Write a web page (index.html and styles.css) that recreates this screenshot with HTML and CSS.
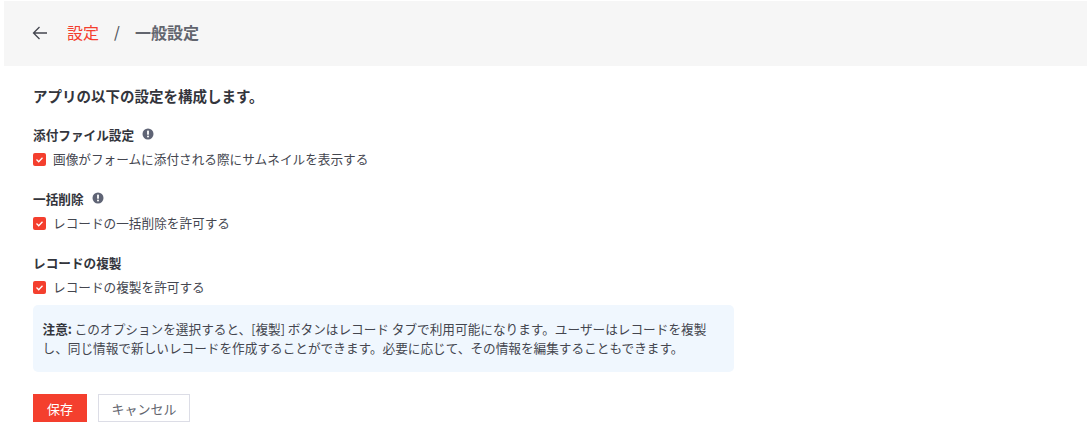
FILE: index.html
```html
<!DOCTYPE html>
<html lang="ja">
<head>
<meta charset="utf-8">
<title>一般設定</title>
<link rel="stylesheet" href="styles.css">
</head>
<body>
<header class="topbar">
  <svg class="back" width="16" height="16" viewBox="0 0 16 16" fill="none" stroke="#44464f" stroke-width="1.3"><path d="M15 8H1.5M7.5 2L1.5 8l6 6"/></svg>
  <a class="crumb-link">設定</a>
  <span class="crumb-sep">/</span>
  <span class="crumb-current">一般設定</span>
</header>
<main class="content">
  <h1 class="intro">アプリの以下の設定を構成します。</h1>
  <section class="group">
    <div class="group-title">添付ファイル設定
      <svg class="info" width="12" height="12" viewBox="0 0 12 12"><circle cx="6" cy="6" r="5.5" fill="#5f6475"/><rect x="5.1" y="2.6" width="1.8" height="4.2" rx=".6" fill="#fff"/><circle cx="6" cy="8.6" r="1" fill="#fff"/></svg>
    </div>
    <label class="check"><span class="box"><svg width="13" height="13" viewBox="0 0 13 13" fill="none" stroke="#fff" stroke-width="1.3"><path d="M3.5 6.5l2.2 2.2 3.8-4"/></svg></span>画像がフォームに添付される際にサムネイルを表示する</label>
  </section>
  <section class="group">
    <div class="group-title">一括削除
      <svg class="info" width="12" height="12" viewBox="0 0 12 12"><circle cx="6" cy="6" r="5.5" fill="#5f6475"/><rect x="5.1" y="2.6" width="1.8" height="4.2" rx=".6" fill="#fff"/><circle cx="6" cy="8.6" r="1" fill="#fff"/></svg>
    </div>
    <label class="check"><span class="box"><svg width="13" height="13" viewBox="0 0 13 13" fill="none" stroke="#fff" stroke-width="1.3"><path d="M3.5 6.5l2.2 2.2 3.8-4"/></svg></span>レコードの一括削除を許可する</label>
  </section>
  <section class="group last">
    <div class="group-title">レコードの複製</div>
    <label class="check"><span class="box"><svg width="13" height="13" viewBox="0 0 13 13" fill="none" stroke="#fff" stroke-width="1.3"><path d="M3.5 6.5l2.2 2.2 3.8-4"/></svg></span>レコードの複製を許可する</label>
  </section>
  <div class="note"><b>注意:</b> このオプションを選択すると、[複製] ボタンはレコード タブで利用可能になります。ユーザーはレコードを複製<br>し、同じ情報で新しいレコードを作成することができます。必要に応じて、その情報を編集することもできます。</div>
  <div class="actions">
    <button class="btn primary">保存</button>
    <button class="btn">キャンセル</button>
  </div>
</main>
</body>
</html>
```

FILE: styles.css
```css
* { box-sizing: border-box; }
html, body { margin: 0; padding: 0; background: #fff; }
body {
  font-family: "Noto Sans CJK JP", "Noto Sans", sans-serif;
  font-size: 12.65px;
  color: #44464f;
  height: 437px;
  overflow: hidden;
}
.topbar {
  margin: 1px 0 0 4px;
  height: 65px;
  background: #f6f6f6;
  display: flex;
  align-items: center;
  padding: 0 0 1px 28px;
}
.back { flex: none; }
.crumb-link { margin: 0 0 2px 19px; font-size: 16px; line-height: 22px; color: #f43f2e; }
.crumb-sep { margin: 0 0 2px 15px; font-size: 15px; line-height: 22px; font-weight: 500; color: #55585f; }
.crumb-current { margin: 0 0 2px 15px; font-size: 16px; line-height: 22px; font-weight: 700; color: #62656e; }
.content { padding: 0 33px; }
.intro { margin: 19px 0 0; font-size: 14.5px; line-height: 22px; font-weight: 700; color: #33353c; }
.group { margin-top: 18px; }
.group + .group { margin-top: 20px; }
.group-title { line-height: 20px; font-weight: 700; color: #33353c; display: flex; align-items: center; }
.info { margin: -3px 0 0 8px; }
.check { display: flex; align-items: center; line-height: 20px; margin-top: 4px; color: #44464f; }
.box { width: 13px; height: 13px; border-radius: 2px; background: #f43f2e; margin-right: 7px; display: flex; flex: none; }
.note {
  margin-top: 8px;
  width: 701px;
  height: 67px;
  padding: 14px 9.5px;
  background: #f0f7fe;
  border-radius: 5px;
  line-height: 19px;
  color: #44464f;
}
.note b { color: #33353c; }
.actions { display: flex; gap: 11px; margin-top: 22px; }
.btn {
  height: 28px;
  padding: 0 12.5px;
  font: inherit;
  font-size: 13px;
  background: #fff;
  color: #62656e;
  border: 1px solid #dcdde6;
}
.btn.primary { padding: 0 13px; background: #f43f2e; border-color: #f43f2e; color: #fff; }
```
